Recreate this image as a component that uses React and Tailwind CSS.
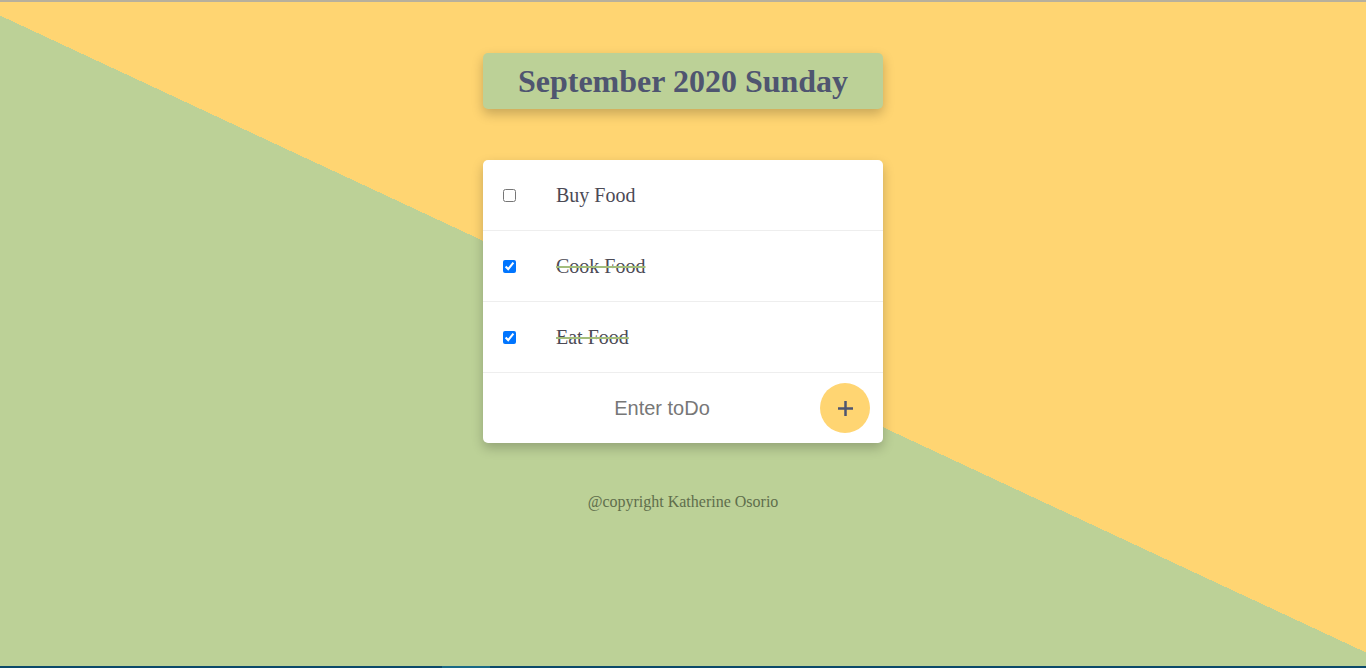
import { useState } from "react";

export default function App() {
  const [items, setItems] = useState([
    { id: 1, text: "Buy Food", done: false },
    { id: 2, text: "Cook Food", done: true },
    { id: 3, text: "Eat Food", done: true },
  ]);
  const [input, setInput] = useState("");

  // Toggle a todo item
  const toggle = (id) => {
    setItems(items.map((item) => (item.id === id ? { ...item, done: !item.done } : item)));
  };

  const addItem = () => {
    if (!input.trim()) return;
    setItems([...items, { id: Date.now(), text: input, done: false }]);
    setInput("");
  };

  return (
    <div className="h-[668px] flex flex-col overflow-hidden">
      <div className="h-[2px] bg-[#b8b09c]" />
      <div className="flex-1 flex flex-col items-center bg-[linear-gradient(25deg,#bcd197_50%,#ffd572_50%)] font-['Liberation_Serif',serif]">
        <div className="mt-[51px] w-[400px] h-[56px] flex items-center justify-center rounded-[5px] bg-[#bcd197] shadow-[0_5px_12px_rgba(0,0,0,0.22)]">
          <h1 className="text-[32px] font-bold text-[#4f5570]">September 2020 Sunday</h1>
        </div>

        {/* Todo card */}
        <div className="mt-[51px] w-[400px] bg-white rounded-[5px] shadow-[0_5px_12px_rgba(0,0,0,0.22)]">
          {items.map((item) => (
            <div key={item.id} className="h-[71px] flex items-center border-b border-[#eeeeee]">
              <input
                type="checkbox"
                checked={item.done}
                onChange={() => toggle(item.id)}
                className="ml-[20px] m-0 w-[13px] h-[13px]"
              />
              <p
                className={`ml-[40px] text-[20px] text-[#4b4a55] ${
                  item.done ? "line-through decoration-[#a3bd7c] decoration-2" : ""
                }`}
              >
                {item.text}
              </p>
            </div>
          ))}
          <div className="h-[70px] flex items-center">
            <input
              type="text"
              value={input}
              onChange={(e) => setInput(e.target.value)}
              placeholder="Enter toDo"
              className="flex-1 min-w-0 pl-[21px] text-center text-[20px] font-['Liberation_Sans',sans-serif] text-[#555] placeholder:text-[#777] outline-none bg-transparent"
            />
            <button
              onClick={addItem}
              className="mr-[13px] w-[50px] h-[50px] rounded-full bg-[#ffd572] flex items-center justify-center text-[#4f5570]"
              aria-label="Add todo"
            >
              <svg width="17" height="17" viewBox="0 0 17 17">
                <path d="M8.5 1v15M1 8.5h15" stroke="currentColor" strokeWidth="2.5" />
              </svg>
            </button>
          </div>
        </div>

        <p className="mt-[47px] text-[16px] text-[#5f6e4c]">@copyright Katherine Osorio</p>
      </div>
      <div className="h-[2px] bg-[#0c4a6a] flex">
        <div className="ml-[442px] w-[48px] bg-[#1a6a86]" />
      </div>
    </div>
  );
}
